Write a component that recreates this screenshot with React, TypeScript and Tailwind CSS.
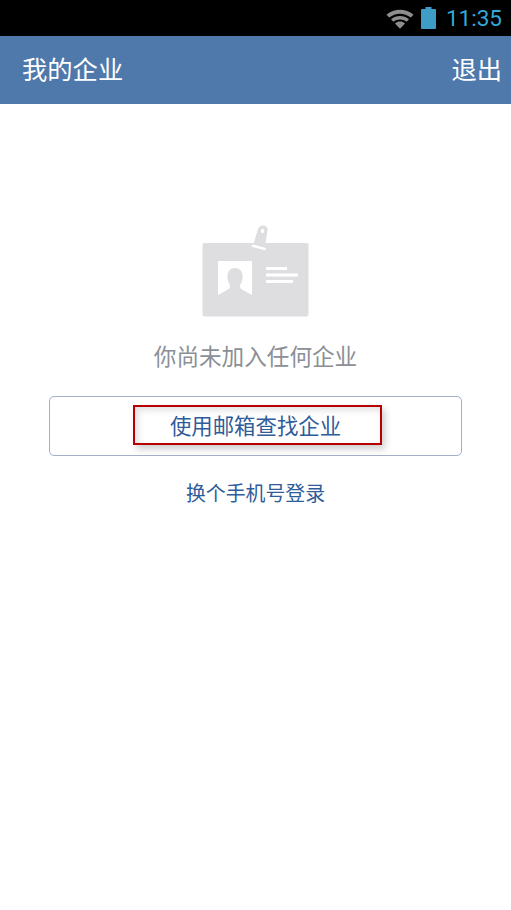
import React from 'react';

const font = "font-['Roboto','Noto_Sans_CJK_SC',sans-serif]";

const WifiIcon = () => (
  <svg width="28" height="21" viewBox="0 0 28 21">
    <path d="M0.5 6.8 C8 0 20 0 27.5 6.8 L24.8 9.6 C18.5 4.4 9.5 4.4 3.2 9.6 Z" fill="#8e8e8e" />
    <path d="M5 11.2 C10.5 6.8 17.5 6.8 23 11.2 L20.6 13.8 C16.5 10.8 11.5 10.8 7.4 13.8 Z" fill="#8e8e8e" />
    <path d="M9 15.4 C12 13 16 13 19 15.4 L14 20.8 Z" fill="#8e8e8e" />
  </svg>
);

const BatteryIcon = () => (
  <svg width="15" height="22" viewBox="0 0 15 22">
    <path d="M4.5 0 H10.5 V2 H14 Q15 2 15 3 V21 Q15 22 14 22 H1 Q0 22 0 21 V3 Q0 2 1 2 H4.5 Z" fill="#3f9cc6" />
  </svg>
);

const BadgeIcon = () => (
  <svg width="108" height="92" viewBox="0 0 108 92">
    <rect x="0.5" y="18" width="106" height="73.5" rx="2" fill="#dedee0" />
    {/* clip tag */}
    <path d="M51 21 L56 4 Q57.5 0 61.5 0.5 Q66.5 1.5 65.5 6 L62.5 24 Z" fill="#dedee0" />
    <path d="M49 21.5 L51 19.5 L64 23 L63.5 25.5 Z" fill="#ffffff" />
    <ellipse cx="60.5" cy="6" rx="1.6" ry="2.2" fill="#ffffff" />
    {/* photo */}
    <path d="M16 36 H50 V70 L40 64.5 Q37.5 63 38 60 Q41 56 40.5 50 Q39.5 43 33 43 Q26.5 43 25.5 50 Q25 56 28 60 Q28.5 63 26 64.5 L16 70 Z" fill="#ffffff" />
    <rect x="64" y="42" width="21" height="3" fill="#ffffff" />
    <rect x="64" y="48.5" width="32" height="3" fill="#ffffff" />
    <rect x="64" y="55" width="27" height="3" fill="#ffffff" />
  </svg>
);

export default function App() {
  return (
    <div className={`flex h-[910px] w-[511px] flex-col bg-white ${font}`}>
      {/* Status bar */}
      <div className="flex h-9 items-center justify-end bg-black pr-[9px]">
        <WifiIcon />
        <div className="ml-[7px]">
          <BatteryIcon />
        </div>
        <span className="ml-[10px] text-[22.5px] leading-none text-[#35a7d8]">11:35</span>
      </div>

      {/* Header */}
      <div className="flex h-[68px] items-center justify-between bg-[#4f78ab] pl-[22px] pr-[9px] pt-[2px] text-[25.3px] text-white">
        <span>我的企业</span>
        <span>退出</span>
      </div>

      {/* Empty state */}
      <div className="flex flex-col items-center pt-[121px]">
        <BadgeIcon />
        <p className="mt-[26px] text-[22.6px] leading-[30px] text-[#8b8f96]">你尚未加入任何企业</p>
        <div className="relative mt-[23px] flex h-[60px] w-[413px] items-center justify-center rounded-[5px] border border-[#a3b0c8] pt-[2px]">
          <span className="text-[21.4px] text-[#2f5c9a]">使用邮箱查找企业</span>
          <div className="absolute left-[83px] top-[8px] h-[40px] w-[249px] border-2 border-[#b90000] shadow-[3px_4px_7px_rgba(0,0,0,0.2),inset_3px_3px_7px_rgba(0,0,0,0.13)]" />
        </div>
        <p className="mt-[25px] text-[19.9px] leading-[28px] text-[#2f5c9a]">换个手机号登录</p>
      </div>
    </div>
  );
}
